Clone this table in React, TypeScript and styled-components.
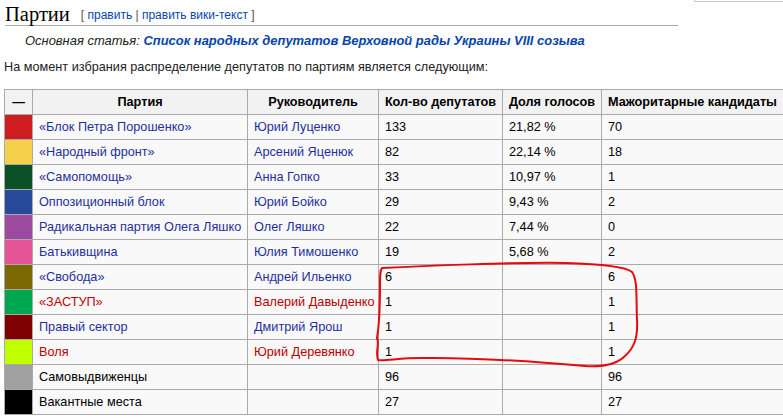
import React from "react";
import styled, { createGlobalStyle } from "styled-components";

const GlobalStyle = createGlobalStyle`
  body {
    margin: 0;
    background: #ffffff;
  }
`;

const Page = styled.div`
  position: relative;
  width: 783px;
  height: 419px;
  overflow: hidden;
  padding-left: 4px;
  box-sizing: border-box;
  font: 12.7px "Liberation Sans", Arial, sans-serif;
  color: #222;
`;

const CornerBox = styled.div`
  float: right;
  width: 88px;
  height: 1px;
  border-left: 1px solid #c8c8c8;
  border-bottom: 1px solid #c8c8c8;
`;

const Heading = styled.h2`
  margin: 0 105px 0 1px;
  padding-top: 3px;
  height: 22px;
  border-bottom: 1px solid #aaa;
  font: normal 20.5px "Liberation Serif", "Times New Roman", serif;
  color: #000;
  line-height: 22px;
`;

const EditLinks = styled.span`
  margin-left: 11px;
  font: 12px "Liberation Sans", Arial, sans-serif;
  color: #555;
  vertical-align: 2px;

  a {
    color: #0645ad;
    text-decoration: none;
  }
`;

const Hatnote = styled.div`
  margin: 7px 0 0 21px;
  font-size: 12.95px;
  font-style: italic;
  line-height: 16px;
  color: #222;

  a {
    color: #0645ad;
    font-weight: bold;
    text-decoration: none;
  }
`;

const Para = styled.p`
  margin: 10px 0 0 0;
  line-height: 16px;
`;

const Table = styled.table`
  margin-top: 14px;
  border-collapse: collapse;
  table-layout: fixed;
  width: 779px;
  background: #f9f9f9;
  border: 1px solid #aaa;
`;

const Th = styled.th`
  background: #f2f2f2;
  border: 1px solid #aaa;
  height: 24px;
  padding: 0 5px;
  font-weight: bold;
  text-align: center;
  color: #000;
  white-space: nowrap;
`;

const Td = styled.td`
  border: 1px solid #aaa;
  height: 24px;
  padding: 0 6px;
  white-space: nowrap;
  color: #000;
`;

const Swatch = styled.td<{ $c: string }>`
  border: 1px solid #aaa;
  background: ${(p) => p.$c};
  padding: 0;
`;

const Link = styled.a<{ $red?: boolean }>`
  color: ${(p) => (p.$red ? "#ba0000" : "#1f2f9f")};
  text-decoration: none;
`;

const Marker = styled.svg`
  position: absolute;
  left: 0;
  top: 0;
  pointer-events: none;
`;

type Row = {
  color: string;
  party: string;
  leader?: string;
  seats: string;
  share?: string;
  major: string;
  red?: boolean;
  plain?: boolean;
};

const rows: Row[] = [
  { color: "#cf1c20", party: "«Блок Петра Порошенко»", leader: "Юрий Луценко", seats: "133", share: "21,82 %", major: "70" },
  { color: "#f5d04a", party: "«Народный фронт»", leader: "Арсений Яценюк", seats: "82", share: "22,14 %", major: "18" },
  { color: "#0b5026", party: "«Самопомощь»", leader: "Анна Гопко", seats: "33", share: "10,97 %", major: "1" },
  { color: "#284a9a", party: "Оппозиционный блок", leader: "Юрий Бойко", seats: "29", share: "9,43 %", major: "2" },
  { color: "#9c4aa0", party: "Радикальная партия Олега Ляшко", leader: "Олег Ляшко", seats: "22", share: "7,44 %", major: "0" },
  { color: "#e45596", party: "Батькивщина", leader: "Юлия Тимошенко", seats: "19", share: "5,68 %", major: "2" },
  { color: "#7b6800", party: "«Свобода»", leader: "Андрей Ильенко", seats: "6", major: "6" },
  { color: "#00a650", party: "«ЗАСТУП»", leader: "Валерий Давыденко", seats: "1", major: "1", red: true },
  { color: "#7e0000", party: "Правый сектор", leader: "Дмитрий Ярош", seats: "1", major: "1" },
  { color: "#bfff00", party: "Воля", leader: "Юрий Деревянко", seats: "1", major: "1", red: true },
  { color: "#a0a0a0", party: "Самовыдвиженцы", seats: "96", major: "96", plain: true },
  { color: "#000000", party: "Вакантные места", seats: "27", major: "27", plain: true },
];

export default function App() {
  return (
    <Page>
      <GlobalStyle />
      <CornerBox />
      <Heading>
        Партии
        <EditLinks>
          [ <a href="#">править</a> | <a href="#">править вики-текст</a> ]
        </EditLinks>
      </Heading>
      <Hatnote>
        Основная статья:{" "}
        <a href="#">Список народных депутатов Верховной рады Украины VIII созыва</a>
      </Hatnote>
      <Para>На момент избрания распределение депутатов по партиям является следующим:</Para>
      <Table>
        <colgroup>
          <col style={{ width: 28 }} />
          <col style={{ width: 215 }} />
          <col style={{ width: 131 }} />
          <col style={{ width: 124 }} />
          <col style={{ width: 99 }} />
          <col style={{ width: 182 }} />
        </colgroup>
        <thead>
          <tr>
            <Th>—</Th>
            <Th>Партия</Th>
            <Th>Руководитель</Th>
            <Th>Кол-во депутатов</Th>
            <Th>Доля голосов</Th>
            <Th>Мажоритарные кандидаты</Th>
          </tr>
        </thead>
        <tbody>
          {rows.map((r) => (
            <tr key={r.party}>
              <Swatch $c={r.color} />
              <Td>{r.plain ? r.party : <Link href="#" $red={r.red}>{r.party}</Link>}</Td>
              <Td>{r.leader && <Link href="#" $red={r.red}>{r.leader}</Link>}</Td>
              <Td>{r.seats}</Td>
              <Td>{r.share}</Td>
              <Td>{r.major}</Td>
            </tr>
          ))}
        </tbody>
      </Table>
      <Marker width="783" height="419" viewBox="0 0 783 419">
        <path
          d="M 382 268 C 420 266, 520 262, 565 263 C 600 264, 625 266, 632 272 C 638 280, 636 300, 637 320 C 638 338, 634 348, 625 356 C 615 366, 600 367, 585 366 C 540 362, 480 357, 420 358 C 400 358, 385 361, 378 360 C 375 350, 380 345, 377 338 C 380 320, 380 300, 380 285 C 380 275, 380 270, 382 268 Z"
          fill="none"
          stroke="#e8090f"
          strokeWidth="2"
          strokeLinejoin="round"
        />
      </Marker>
    </Page>
  );
}
